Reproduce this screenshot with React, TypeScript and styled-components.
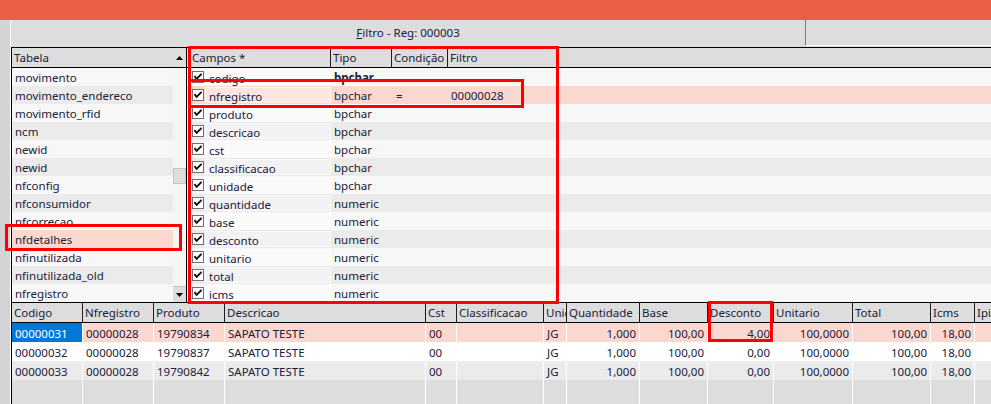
import React from 'react';
import styled, { createGlobalStyle, css } from 'styled-components';

const GlobalStyle = createGlobalStyle`
  html, body {
    margin: 0;
    padding: 0;
    background: #dddddd;
  }
  body {
    font-family: 'Noto Sans', 'Open Sans', sans-serif;
    font-size: 11.5px;
    color: #20203a;
  }
  * {
    box-sizing: border-box;
  }
`;

const LIGHT = '#f7f7f7';
const DARK = '#ebebeb';
const PINK = '#fad8d0';

const Screen = styled.div`
  position: relative;
  width: 991px;
  height: 404px;
  overflow: hidden;
  display: flex;
  flex-direction: column;
  background: #dddddd;
`;

const TopBar = styled.div`
  height: 20px;
  flex-shrink: 0;
  background: #ea5e43;
`;

const Body = styled.div`
  flex: 1;
  display: flex;
  min-height: 0;
`;

const SideStrip = styled.div`
  width: 11px;
  flex-shrink: 0;
  background: #d4d4d4;
  border-right: 1px solid #ffffff;
`;

const Workspace = styled.div`
  flex: 1;
  min-width: 0;
  display: flex;
  flex-direction: column;
`;

const CaptionBar = styled.div`
  height: 27px;
  flex-shrink: 0;
  display: flex;
`;

const CaptionTitle = styled.div`
  flex: 1;
  display: flex;
  align-items: center;
  justify-content: center;
  padding-bottom: 3px;
  white-space: nowrap;
`;

const Accel = styled.span`
  text-decoration: underline;
`;

const CaptionSide = styled.div`
  width: 186px;
  height: 26px;
  border-left: 1px solid #7a7a7a;
  border-bottom: 1px solid #ffffff;
`;

const Upper = styled.div`
  height: 255px;
  flex-shrink: 0;
  display: flex;
  border-top: 1px solid #000000;
`;

const LeftPane = styled.div`
  width: 176px;
  flex-shrink: 0;
  display: flex;
  border-left: 1px solid #000000;
  border-right: 1px solid #000000;
`;

const TableColumn = styled.div`
  flex: 1;
  min-width: 0;
  display: flex;
  flex-direction: column;
`;

const HeaderCell = styled.div<{ $sep?: boolean }>`
  height: 20px;
  padding: 0 0 0 2px;
  display: flex;
  align-items: center;
  background: #dddddd;
  border-bottom: 1px solid #000000;
  white-space: nowrap;
  overflow: hidden;
  ${(p) =>
    p.$sep &&
    css`
      border-right: 1px solid #1e1e1e;
    `}
`;

const ListRow = styled.div<{ $bg: string }>`
  height: 18px;
  flex-shrink: 0;
  display: flex;
  align-items: center;
  padding: 1px 0 0 3px;
  background: ${(p) => p.$bg};
  white-space: nowrap;
`;

const ScrollBar = styled.div`
  width: 13px;
  flex-shrink: 0;
  display: flex;
  flex-direction: column;
`;

const ScrollButton = styled.div<{ $top?: boolean }>`
  height: ${(p) => (p.$top ? 20 : 16)}px;
  flex-shrink: 0;
  display: flex;
  align-items: center;
  justify-content: center;
  background: #dddddd;
  ${(p) =>
    p.$top
      ? css`
          border-bottom: 1px solid #000000;
        `
      : css`
          border-top: 1px solid #c8c8c8;
        `}
`;

const ScrollTrack = styled.div`
  flex: 1;
  display: flex;
  flex-direction: column;
  background: repeating-conic-gradient(#ffffff 0 25%, #ececec 0 50%) 0 0 / 2px 2px;
`;

const ScrollThumb = styled.div`
  margin-top: 100px;
  height: 16px;
  background: #dddddd;
  border: 1px solid #c4c4c4;
`;

const FieldPane = styled.div`
  flex: 1;
  min-width: 0;
  display: flex;
  flex-direction: column;
`;

const fieldColumns = '144px 61px 56px 1fr';

const FieldHeader = styled.div`
  display: grid;
  grid-template-columns: ${fieldColumns};
`;

const FieldRow = styled.div<{ $bg: string }>`
  height: 18px;
  flex-shrink: 0;
  display: grid;
  grid-template-columns: ${fieldColumns};
  background: ${(p) => p.$bg};
  white-space: nowrap;
`;

const CheckCell = styled.div`
  display: flex;
  align-items: center;
  padding-left: 5px;
`;

const NameBox = styled.div`
  flex: 1;
  height: 16px;
  margin-left: 1px;
  display: flex;
  align-items: center;
  padding: 2px 0 0 3px;
  background: rgba(255, 255, 255, 0.35);
  border: 1px solid rgba(255, 255, 255, 0.7);
`;

const FieldCell = styled.div<{ $bold?: boolean; $pad?: number }>`
  display: flex;
  align-items: center;
  padding: 1px 0 0 ${(p) => p.$pad ?? 3}px;
  font-weight: ${(p) => (p.$bold ? 700 : 400)};
  overflow: hidden;
`;

const Lower = styled.div`
  flex: 1;
  min-height: 0;
  display: flex;
  flex-direction: column;
  border-top: 1px solid #000000;
  border-left: 1px solid #000000;
`;

const gridColumns = '71px 71px 71px 201px 31px 87px 23px 73px 68px 66px 79px 78px 44px 80px';

const GridHeader = styled.div`
  display: grid;
  grid-template-columns: ${gridColumns};
  flex-shrink: 0;
`;

const GridRow = styled.div<{ $bg: string }>`
  height: 19px;
  flex-shrink: 0;
  display: grid;
  grid-template-columns: ${gridColumns};
  background: ${(p) => p.$bg};
`;

const GridFiller = styled.div`
  flex: 1;
  display: grid;
  grid-template-columns: ${gridColumns};
`;

const GridCell = styled.div<{ $right?: boolean; $selected?: boolean }>`
  display: flex;
  align-items: center;
  justify-content: ${(p) => (p.$right ? 'flex-end' : 'flex-start')};
  padding: 1px 3px 0 3px;
  border-right: 1px solid #ffffff;
  white-space: nowrap;
  overflow: hidden;
  ${(p) =>
    p.$selected &&
    css`
      background: #0078d7;
      color: #ffffff;
    `}
`;

const Annotation = styled.div<{ $x: number; $y: number; $w: number; $h: number }>`
  position: absolute;
  left: ${(p) => p.$x}px;
  top: ${(p) => p.$y}px;
  width: ${(p) => p.$w}px;
  height: ${(p) => p.$h}px;
  border: 3px solid #ff0000;
  pointer-events: none;
`;

const tables = [
  'movimento',
  'movimento_endereco',
  'movimento_rfid',
  'ncm',
  'newid',
  'newid',
  'nfconfig',
  'nfconsumidor',
  'nfcorrecao',
  'nfdetalhes',
  'nfinutilizada',
  'nfinutilizada_old',
  'nfregistro',
];

type Field = { name: string; type: string; cond?: string; filter?: string };

const fields: Field[] = [
  { name: 'codigo', type: 'bpchar' },
  { name: 'nfregistro', type: 'bpchar', cond: '=', filter: '00000028' },
  { name: 'produto', type: 'bpchar' },
  { name: 'descricao', type: 'bpchar' },
  { name: 'cst', type: 'bpchar' },
  { name: 'classificacao', type: 'bpchar' },
  { name: 'unidade', type: 'bpchar' },
  { name: 'quantidade', type: 'numeric' },
  { name: 'base', type: 'numeric' },
  { name: 'desconto', type: 'numeric' },
  { name: 'unitario', type: 'numeric' },
  { name: 'total', type: 'numeric' },
  { name: 'icms', type: 'numeric' },
];

const columns = [
  { title: 'Codigo' },
  { title: 'Nfregistro' },
  { title: 'Produto' },
  { title: 'Descricao' },
  { title: 'Cst' },
  { title: 'Classificacao' },
  { title: 'Unidade' },
  { title: 'Quantidade', right: true },
  { title: 'Base', right: true },
  { title: 'Desconto', right: true },
  { title: 'Unitario', right: true },
  { title: 'Total', right: true },
  { title: 'Icms', right: true },
  { title: 'Ipi' },
];

const records = [
  ['00000031', '00000028', '19790834', 'SAPATO TESTE', '00', '', 'JG', '1,000', '100,00', '4,00', '100,0000', '100,00', '18,00', ''],
  ['00000032', '00000028', '19790837', 'SAPATO TESTE', '00', '', 'JG', '1,000', '100,00', '0,00', '100,0000', '100,00', '18,00', ''],
  ['00000033', '00000028', '19790842', 'SAPATO TESTE', '00', '', 'JG', '1,000', '100,00', '0,00', '100,0000', '100,00', '18,00', ''],
];

const recordBg = [PINK, '#ffffff', DARK];

const stripe = (i: number, pinkAt: number) => (i === pinkAt ? PINK : i % 2 === 0 ? LIGHT : DARK);

const Check = () => (
  <svg width='12' height='12' viewBox='0 0 12 12'>
    <rect x='0.5' y='0.5' width='11' height='11' fill='#ffffff' stroke='#707070' />
    <path d='M2.4 5.2 L4.6 7.8 L9.6 2.8' fill='none' stroke='#111111' strokeWidth='1.9' />
  </svg>
);

const Arrow = ({ up }: { up?: boolean }) => (
  <svg width='7' height='4' viewBox='0 0 7 4'>
    <path d={up ? 'M0 4 L3.5 0 L7 4 Z' : 'M0 0 L7 0 L3.5 4 Z'} fill='#000000' />
  </svg>
);

export default function App() {
  return (
    <Screen>
      <GlobalStyle />
      <TopBar />
      <Body>
        <SideStrip />
        <Workspace>
          <CaptionBar>
            <CaptionTitle>
              <Accel>F</Accel>iltro - Reg: 000003
            </CaptionTitle>
            <CaptionSide />
          </CaptionBar>
          <Upper>
            <LeftPane>
              <TableColumn>
                <HeaderCell>Tabela</HeaderCell>
                {tables.map((t, i) => (
                  <ListRow key={i} $bg={stripe(i, 9)}>
                    {t}
                  </ListRow>
                ))}
              </TableColumn>
              <ScrollBar>
                <ScrollButton $top>
                  <Arrow up />
                </ScrollButton>
                <ScrollTrack>
                  <ScrollThumb />
                </ScrollTrack>
                <ScrollButton>
                  <Arrow />
                </ScrollButton>
              </ScrollBar>
            </LeftPane>
            <FieldPane>
              <FieldHeader>
                <HeaderCell $sep style={{ paddingLeft: 5 }}>
                  Campos *
                </HeaderCell>
                <HeaderCell $sep>Tipo</HeaderCell>
                <HeaderCell $sep>Condição</HeaderCell>
                <HeaderCell>Filtro</HeaderCell>
              </FieldHeader>
              {fields.map((f, i) => (
                <FieldRow key={f.name} $bg={stripe(i, 1)}>
                  <CheckCell>
                    <Check />
                    <NameBox>{f.name}</NameBox>
                  </CheckCell>
                  <FieldCell $bold={i === 0}>{f.type}</FieldCell>
                  <FieldCell $pad={4}>{f.cond}</FieldCell>
                  <FieldCell>{f.filter}</FieldCell>
                </FieldRow>
              ))}
            </FieldPane>
          </Upper>
          <Lower>
            <GridHeader>
              {columns.map((c) => (
                <HeaderCell key={c.title} $sep>
                  {c.title}
                </HeaderCell>
              ))}
            </GridHeader>
            {records.map((r, i) => (
              <GridRow key={i} $bg={recordBg[i]}>
                {r.map((v, j) => (
                  <GridCell key={j} $right={columns[j].right} $selected={i === 0 && j === 0}>
                    {v}
                  </GridCell>
                ))}
              </GridRow>
            ))}
            <GridFiller>
              {columns.map((c) => (
                <GridCell key={c.title} />
              ))}
            </GridFiller>
          </Lower>
        </Workspace>
      </Body>
      <Annotation $x={188} $y={46} $w={371} $h={258} />
      <Annotation $x={188} $y={79} $w={336} $h={29} />
      <Annotation $x={5} $y={224} $w={177} $h={27} />
      <Annotation $x={708} $y={301} $w={65} $h={41} />
    </Screen>
  );
}
